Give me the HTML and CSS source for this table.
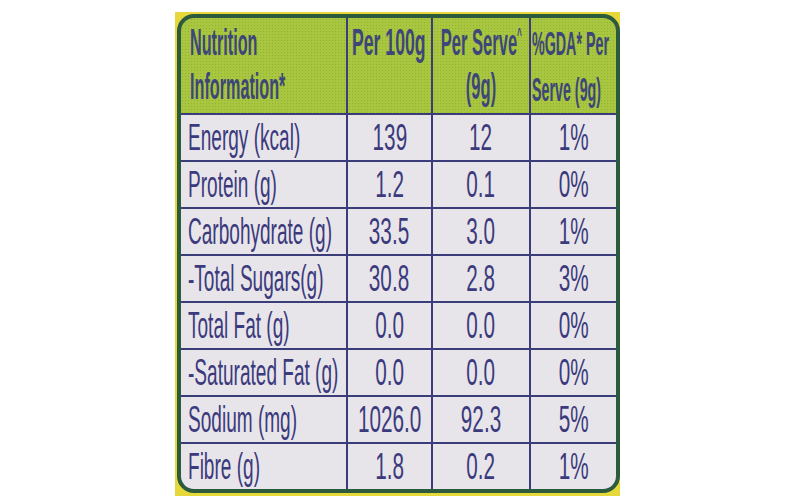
FILE: index.html
```html
<!DOCTYPE html>
<html lang="en">
<head>
<meta charset="utf-8">
<title>Nutrition Information</title>
<link rel="stylesheet" href="styles.css">
</head>
<body>
<div class="page">
  <div class="label">
    <div class="table">
      <div class="hd first"><span class="t l">Nutrition</span><span class="t l">Information*</span></div>
      <div class="hd per100"><span class="t l">Per 100g</span></div>
      <div class="hd ctr"><span class="t c">Per Serve<sup>^</sup></span><span class="t c">(9g)</span></div>
      <div class="hd gda"><span class="t l">%GDA* Per</span><span class="t l">Serve (9g)</span></div>

      <div class="cell name"><span class="t l">Energy (kcal)</span></div>
      <div class="cell"><span class="t c">139</span></div>
      <div class="cell"><span class="t c">12</span></div>
      <div class="cell"><span class="t c">1%</span></div>

      <div class="cell name"><span class="t l">Protein (g)</span></div>
      <div class="cell"><span class="t c">1.2</span></div>
      <div class="cell"><span class="t c">0.1</span></div>
      <div class="cell"><span class="t c">0%</span></div>

      <div class="cell name"><span class="t l">Carbohydrate (g)</span></div>
      <div class="cell"><span class="t c">33.5</span></div>
      <div class="cell"><span class="t c">3.0</span></div>
      <div class="cell"><span class="t c">1%</span></div>

      <div class="cell name"><span class="t l">-Total Sugars(g)</span></div>
      <div class="cell"><span class="t c">30.8</span></div>
      <div class="cell"><span class="t c">2.8</span></div>
      <div class="cell"><span class="t c">3%</span></div>

      <div class="cell name"><span class="t l">Total Fat (g)</span></div>
      <div class="cell"><span class="t c">0.0</span></div>
      <div class="cell"><span class="t c">0.0</span></div>
      <div class="cell"><span class="t c">0%</span></div>

      <div class="cell name"><span class="t l">-Saturated Fat (g)</span></div>
      <div class="cell"><span class="t c">0.0</span></div>
      <div class="cell"><span class="t c">0.0</span></div>
      <div class="cell"><span class="t c">0%</span></div>

      <div class="cell name"><span class="t l">Sodium (mg)</span></div>
      <div class="cell"><span class="t c">1026.0</span></div>
      <div class="cell"><span class="t c">92.3</span></div>
      <div class="cell"><span class="t c">5%</span></div>

      <div class="cell name"><span class="t l">Fibre (g)</span></div>
      <div class="cell"><span class="t c">1.8</span></div>
      <div class="cell"><span class="t c">0.2</span></div>
      <div class="cell"><span class="t c">1%</span></div>
    </div>
  </div>
</div>
</body>
</html>
```

FILE: styles.css
```css
html, body {
  margin: 0;
  padding: 0;
  background: #ffffff;
}

.page {
  width: 800px;
  height: 503px;
  padding-top: 12px;
  padding-left: 175px;
  box-sizing: border-box;
}

.label {
  width: 445px;
  height: 484px;
  background: #e6d83a;
  padding: 2px 0 0 2px;
  box-sizing: border-box;
}

.table {
  width: 443px;
  border: 4px solid #2c5a3c;
  border-radius: 17px;
  overflow: hidden;
  box-sizing: border-box;
  display: grid;
  grid-template-columns: 165px 83px 96px 85px;
  grid-template-rows: 95px repeat(8, 45px);
  gap: 2px;
  background: #3a3d7a;
  font-family: "Liberation Sans", Arial, sans-serif;
  color: #3b3a7c;
}

.hd {
  background-color: #a8c640;
  background-image: radial-gradient(circle, #93b232 35%, transparent 40%);
  background-size: 3px 3px;
  color: #3d4679;
  font-weight: bold;
  font-size: 36px;
  line-height: 44px;
  padding-top: 3px;
  box-sizing: border-box;
  white-space: nowrap;
  overflow: hidden;
  display: flex;
  flex-direction: column;
  align-items: flex-start;
}

.hd.first { padding-left: 9px; }
.hd.first .t { transform: scaleX(0.45); }
.hd.per100 { padding-left: 4px; }
.hd.per100 .t { transform: scaleX(0.49); }
.hd.ctr { align-items: center; }
.hd.ctr .t { transform: scaleX(0.46); }
.hd.gda { padding-left: 1px; font-size: 34px; line-height: 46px; padding-top: 2px; }
.hd.gda .t { transform: scaleX(0.42); }

.hd sup {
  font-size: 18px;
  line-height: 0;
  vertical-align: 14px;
}

.cell {
  background: #e7e5ea;
  font-size: 37px;
  line-height: 45px;
  white-space: nowrap;
  overflow: hidden;
  display: flex;
  justify-content: center;
  align-items: center;
}

.cell.name {
  justify-content: flex-start;
  padding-left: 7px;
}

.t {
  display: inline-block;
  flex: none;
  transform: scaleX(0.56);
}

.cell.name .t { transform: scaleX(0.515); }

.t.l { transform-origin: left center; }
.t.c { transform-origin: center center; }
```
